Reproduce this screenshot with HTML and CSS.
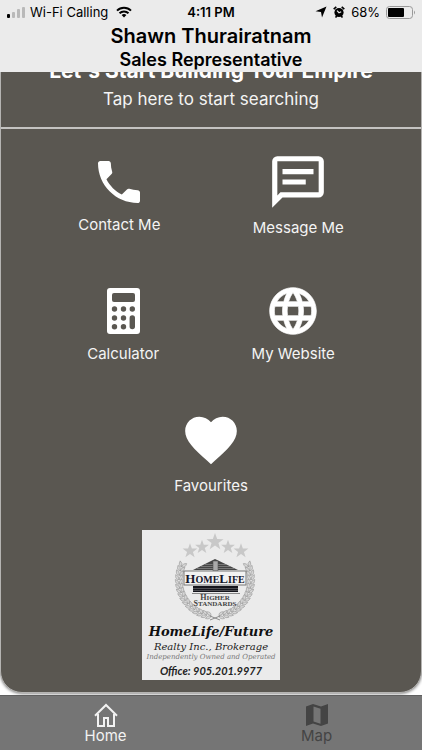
FILE: index.html
```html
<!DOCTYPE html>
<html lang="en">
<head>
<meta charset="utf-8">
<meta name="viewport" content="width=device-width, initial-scale=1">
<title>Shawn Thurairatnam</title>
<link rel="stylesheet" href="styles.css">
</head>
<body>
<header class="top">
  <div class="status">
    <div class="status-left">
      <svg width="20" height="12" viewBox="0 0 20 12" aria-hidden="true"><rect x="1" y="8" width="3" height="4" rx="1"/><g fill="#b9b9b9"><rect x="6" y="6" width="3" height="6" rx="1"/><rect x="11" y="3" width="3" height="9" rx="1"/><rect x="16" y="1" width="3" height="11" rx="1"/></g></svg>
      <span>Wi-Fi Calling</span>
      <svg class="wifi" width="16" height="12" viewBox="0 0 16 12" fill="none" stroke="#000" stroke-width="2" aria-hidden="true"><path d="M1 4.600a10 10 0 0 1 14 0M3.500 7.300a6.400 6.400 0 0 1 9 0"/><path d="M8 11.500 5.600 9.100a3.400 3.400 0 0 1 4.800 0z" fill="#000" stroke="none"/></svg>
    </div>
    <time class="clock">4:11 PM</time>
    <div class="status-right">
      <svg width="12" height="12" viewBox="0 0 12 12" aria-hidden="true"><path d="M11.500.500 7 11.500 6 6 .500 5.300z"/></svg>
      <svg width="12" height="12" viewBox="0 0 12 12" aria-hidden="true"><circle cx="6" cy="6.500" r="4.600"/><path d="M.700 3.200 3.300.900M11.300 3.200 8.700.900M2.500 11.500l1.300-1.500M9.500 11.500 8.200 10" stroke="#000" stroke-width="1.600"/><path d="M4 4.700 6 6.700 8.200 5.700" fill="none" stroke="#ebebeb" stroke-width="1.200"/></svg>
      <span>68%</span>
      <svg width="30" height="13" viewBox="0 0 30 13" aria-hidden="true"><rect x=".5" y=".5" width="26" height="12" rx="3" fill="none" stroke="#999"/><rect x="2" y="2" width="16" height="9" rx="1"/><path d="M28 4.500q2 2 0 4z" fill="#999"/></svg>
    </div>
  </div>
  <h1 class="name">Shawn Thurairatnam</h1>
  <p class="role">Sales Representative</p>
</header>

<main class="scroll">
  <div class="panel">
    <a class="banner" href="#search">
      <strong class="banner-title">Let's Start Building Your Empire</strong>
      <span class="banner-text">Tap here to start searching</span>
    </a>
    <nav class="actions" aria-label="Actions">
      <div class="row">
        <a class="action" href="#contact">
          <svg class="icon" viewBox="0 0 24 24" aria-hidden="true"><path d="M6.620 10.790c1.440 2.830 3.760 5.140 6.590 6.590l2.200-2.200c.27-.27.67-.36 1.020-.24 1.120.37 2.330.57 3.570.57.55 0 1 .45 1 1V20c0 .55-.45 1-1 1-9.390 0-17-7.610-17-17 0-.55.45-1 1-1h3.500c.55 0 1 .45 1 1 0 1.250.2 2.450.57 3.570.11.35.03.74-.25 1.020l-2.200 2.200z"/></svg>
          <span>Contact Me</span>
        </a>
        <a class="action" href="#message">
          <svg class="icon icon-large" viewBox="0 0 24 24" aria-hidden="true"><path fill-rule="evenodd" d="M4 2h16a2 2 0 0 1 2 2v12a2 2 0 0 1-2 2H6l-4 4V4a2 2 0 0 1 2-2zM4 4v13.200L5.200 16H20V4zM6 7h12v2H6zM6 11h9v2H6z"/></svg>
          <span>Message Me</span>
        </a>
      </div>
      <div class="row">
        <a class="action" href="#calculator">
          <svg class="icon" viewBox="0 0 56 56" aria-hidden="true"><rect x="12" y="5" width="33" height="46" rx="3"/><g fill="#5a5751"><rect x="17" y="10" width="23" height="9" rx="2"/><circle cx="19.500" cy="26" r="2.700"/><circle cx="28.500" cy="26" r="2.700"/><circle cx="37.300" cy="26" r="2.700"/><circle cx="19.500" cy="35" r="2.700"/><circle cx="28.500" cy="35" r="2.700"/><circle cx="19.500" cy="43.700" r="2.700"/><circle cx="28.500" cy="43.700" r="2.700"/><rect x="34.600" y="32.300" width="5.400" height="14" rx="2.700"/></g></svg>
          <span>Calculator</span>
        </a>
        <a class="action" href="#website">
          <svg class="icon" viewBox="0 0 24 24" aria-hidden="true"><path stroke="#fff" stroke-width=".3" d="M11.990 2C6.470 2 2 6.480 2 12s4.470 10 9.990 10C17.520 22 22 17.520 22 12S17.520 2 11.990 2zm6.930 6h-2.950c-.32-1.250-.78-2.450-1.380-3.560 1.840.63 3.370 1.910 4.330 3.560zM12 4.040c.83 1.200 1.480 2.530 1.910 3.960h-3.820c.43-1.430 1.080-2.760 1.910-3.960zM4.260 14C4.100 13.360 4 12.690 4 12s.1-1.360.26-2h3.380c-.08.66-.14 1.320-.14 2s.06 1.340.14 2H4.260zm.82 2h2.950c.32 1.250.78 2.450 1.380 3.560-1.840-.63-3.370-1.900-4.330-3.560zm2.950-8H5.080c.96-1.660 2.490-2.930 4.330-3.560C8.810 5.550 8.350 6.750 8.030 8zM12 19.960c-.83-1.200-1.480-2.530-1.910-3.960h3.820c-.43 1.430-1.080 2.760-1.910 3.960zM14.340 14H9.660c-.09-.66-.16-1.320-.16-2s.07-1.350.16-2h4.680c.09.65.16 1.320.16 2s-.07 1.340-.16 2zm.25 5.560c.6-1.110 1.060-2.310 1.380-3.560h2.950c-.96 1.650-2.490 2.930-4.330 3.560zM16.360 14c.08-.66.14-1.320.14-2s-.06-1.340-.14-2h3.380c.16.64.26 1.310.26 2s-.1 1.360-.26 2h-3.380z"/></svg>
          <span>My Website</span>
        </a>
      </div>
      <div class="row">
        <a class="action" href="#favourites">
          <svg class="icon icon-large" viewBox="0 0 24 24" aria-hidden="true"><path d="M12 21.350l-1.450-1.320C5.400 15.360 2 12.280 2 8.500 2 5.420 4.420 3 7.500 3c1.740 0 3.410.81 4.500 2.090C13.090 3.810 14.760 3 16.500 3 19.580 3 22 5.420 22 8.500c0 3.780-3.400 6.860-8.550 11.540L12 21.350z"/></svg>
          <span>Favourites</span>
        </a>
      </div>
    </nav>
    <section class="broker">
      <svg class="emblem" viewBox="0 0 138 92" role="img" aria-label="HomeLife Higher Standards">
        <defs>
          <path id="star" d="M0-10 2.400-3.200 9.500-3.100 3.800 1.200 5.900 8.100 0 4 -5.900 8.100 -3.800 1.200 -9.500-3.100 -2.400-3.200z"/>
          <path id="leaf" d="M0 1q-4 0-3.500-5Q0-3 0 1zM0 1q4 0 3.500-5Q0-3 0 1z" fill="#d6d6d6" stroke="#999" stroke-width=".6"/>
          <g id="branch">
            <use href="#leaf" transform="rotate(-8) translate(0 36) rotate(90)"/>
            <use href="#leaf" transform="rotate(-15) translate(0 36) rotate(90)"/>
            <use href="#leaf" transform="rotate(-22) translate(0 36) rotate(90)"/>
            <use href="#leaf" transform="rotate(-29) translate(0 36) rotate(90)"/>
            <use href="#leaf" transform="rotate(-36) translate(0 36) rotate(90)"/>
            <use href="#leaf" transform="rotate(-43) translate(0 36) rotate(90)"/>
            <use href="#leaf" transform="rotate(-50) translate(0 36) rotate(90)"/>
            <use href="#leaf" transform="rotate(-57) translate(0 36) rotate(90)"/>
            <use href="#leaf" transform="rotate(-64) translate(0 36) rotate(90)"/>
            <use href="#leaf" transform="rotate(-71) translate(0 36) rotate(90)"/>
            <use href="#leaf" transform="rotate(-78) translate(0 36) rotate(90)"/>
            <use href="#leaf" transform="rotate(-85) translate(0 36) rotate(90)"/>
            <use href="#leaf" transform="rotate(-92) translate(0 36) rotate(90)"/>
            <use href="#leaf" transform="rotate(-99) translate(0 36) rotate(90)"/>
            <use href="#leaf" transform="rotate(-106) translate(0 36) rotate(90)"/>
            <use href="#leaf" transform="rotate(-113) translate(0 36) rotate(90)"/>
          </g>
        </defs>
        <g fill="#c8c8c8">
          <use href="#star" transform="translate(73 12) scale(.9)"/>
          <use href="#star" transform="translate(60 17) scale(.73)"/>
          <use href="#star" transform="translate(86 17) scale(.73)"/>
          <use href="#star" transform="translate(48 21) scale(.78)"/>
          <use href="#star" transform="translate(99 21) scale(.78)"/>
        </g>
        <use href="#branch" transform="translate(73 50)"/>
        <use href="#branch" transform="translate(73 50) scale(-1 1)"/>
        <path d="M68 86l10 4M78 86l-10 4" stroke="#8d8d8d"/>
        <path d="M73 29 96 40H51z" fill="#444"/>
        <path d="M63 34.500h21M59 36.500h29M55 38.500h37" stroke="#999" stroke-width=".6"/>
        <rect x="71" y="31" width="5" height="10" fill="#aaa" stroke="#555" stroke-width=".6"/>
        <rect x="42" y="41" width="62" height="14" fill="#f2f2f2" stroke="#777"/>
        <rect x="51" y="56" width="45" height="6" fill="#15151c"/>
        <path d="M51 58.500h45M51 60.500h45" stroke="#888" stroke-width=".5"/>
        <path d="M50 63.500h48" stroke="#888"/>
        <g class="emblem-text">
          <text x="73" y="53" font-size="10"><tspan font-size="13">H</tspan>OME<tspan font-size="13">L</tspan>IFE</text>
          <text x="73" y="70" font-size="7" fill="#444"><tspan font-size="8">H</tspan>IGHER</text>
          <text x="73" y="76" font-size="7" fill="#444"><tspan font-size="8">S</tspan>TANDARDS</text>
        </g>
      </svg>
      <p class="broker-name">HomeLife/Future</p>
      <p class="broker-type">Realty Inc., Brokerage</p>
      <p class="broker-note">Independently Owned and Operated</p>
      <p class="broker-phone">Office: 905.201.9977</p>
    </section>
  </div>
</main>

<nav class="tabs" aria-label="Main">
  <a class="tab tab-active" href="#home" aria-current="page">
    <svg width="24" height="24" viewBox="0 0 24 24" fill="none" stroke="currentColor" stroke-width="2" aria-hidden="true"><path d="M1 12.700 12 2l11 10.700M4 11v12h6v-8h4v8h6V11"/></svg>
    <span>Home</span>
  </a>
  <a class="tab" href="#map">
    <svg width="24" height="24" viewBox="0 0 24 24" fill="currentColor" aria-hidden="true"><path fill-rule="evenodd" d="M1 3.500 8 1l8 2.500L23 1v19.500L16 23l-8-2.500L1 23zM8.500 3.500v15l7 2.200v-15z"/></svg>
    <span>Map</span>
  </a>
</nav>
</body>
</html>
```
FILE: styles.css
```css
* {
  box-sizing: border-box;
}

body {
  display: flex;
  flex-direction: column;
  height: 100vh;
  margin: 0;
  background: #fff;
  font-family: Inter, "Liberation Sans", sans-serif;
}

h1,
p {
  margin: 0;
}

a {
  color: inherit;
  text-decoration: none;
}

svg {
  display: block;
  flex: none;
}

.top {
  flex: none;
  height: 72px;
  background: #ebebeb;
  color: #000;
  text-align: center;
}

.status {
  display: grid;
  grid-template-columns: 1fr auto 1fr;
  align-items: center;
  height: 24px;
  padding: 0 6px;
  font-size: 13px;
}

.status-left,
.status-right {
  display: flex;
  align-items: center;
  gap: 6px;
}

.status-left {
  gap: 4px;
}

.wifi {
  margin-left: 4px;
}

.status-right {
  justify-content: flex-end;
}

.clock {
  font-weight: 600;
}

.name {
  font-size: 20px;
  font-weight: 600;
  line-height: 24px;
}

.role {
  font-size: 18px;
  font-weight: 600;
  line-height: 24px;
}

.scroll {
  display: flex;
  flex: 1;
  flex-direction: column;
  justify-content: flex-end;
  min-height: 0;
  padding-bottom: 2px;
  overflow: hidden;
}

.panel {
  flex: none;
  border: 1px solid #b5b4b2;
  border-radius: 22px;
  background: #5a5751;
  box-shadow: 0 1px 3px #888;
  color: #f4f4f4;
}

.banner {
  display: flex;
  flex-direction: column;
  align-items: center;
  gap: 2px;
  padding: 12px 8px 16px;
  border-bottom: 2px solid #c4c3c1;
}

.banner-title {
  color: #fff;
  font-size: 21px;
  font-weight: 700;
  line-height: 28px;
}

.banner-text {
  font-size: 17px;
  line-height: 24px;
}

.row {
  display: flex;
  justify-content: center;
  align-items: center;
  gap: 22%;
  padding: 22px 0;
}

.action {
  display: flex;
  flex-direction: column;
  align-items: center;
  gap: 4px;
  font-size: 15px;
  line-height: 22px;
}

.icon {
  width: 56px;
  height: 56px;
  fill: #fff;
}

.icon-large {
  width: 62px;
  height: 62px;
}

.broker {
  width: 138px;
  height: 150px;
  margin: 11px auto 12px;
  background: #ebebeb;
  color: #222;
  font-family: "DejaVu Serif", serif;
  font-style: italic;
  text-align: center;
  white-space: nowrap;
}

.emblem {
  width: 100%;
}

.emblem-text {
  fill: #15152a;
  font-family: "Liberation Serif", serif;
  font-style: normal;
  font-weight: 700;
  text-anchor: middle;
}

.broker-name {
  color: #111;
  font-size: 13px;
  font-weight: 700;
  line-height: 20px;
}

.broker-type {
  font-size: 10px;
  line-height: 10px;
}

.broker-note {
  color: #777;
  font-size: 7px;
  line-height: 10px;
}

.broker-phone {
  font-family: Lato, sans-serif;
  font-size: 11px;
  font-weight: 700;
  line-height: 18px;
}

.tabs {
  display: flex;
  flex: none;
  height: 55px;
  border-top: 1px solid #606060;
  background: #757575;
}

.tab {
  display: flex;
  flex: 1;
  flex-direction: column;
  align-items: center;
  padding-top: 7px;
  color: #444;
  font-size: 15px;
  line-height: 18px;
}

.tab-active {
  color: #f2f2f2;
}
```
